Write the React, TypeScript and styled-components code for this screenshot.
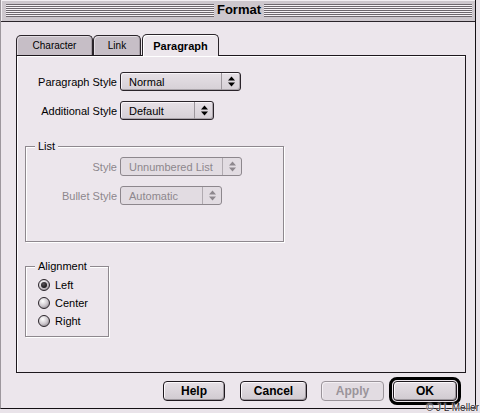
import React from "react";
import styled, { createGlobalStyle } from "styled-components";

const Global = createGlobalStyle`
  html, body { margin: 0; padding: 0; background: #e9e3e9; }
  body { font-family: "Liberation Sans", Arial, sans-serif; font-size: 11px; color: #000; }
  * { box-sizing: border-box; }
`;

const Screen = styled.div`
  position: relative;
  width: 480px;
  height: 413px;
  background: #e9e3e9;
  overflow: hidden;
`;

const Window = styled.div`
  width: 476px;
  height: 409px;
  display: flex;
  flex-direction: column;
  background: #ece6ec;
  border-left: 1px solid #9d979d;
  border-right: 1px solid #141014;
  border-bottom: 1px solid #141014;
`;

const TitleBar = styled.div`
  height: 22px;
  display: flex;
  align-items: center;
  padding: 0 3px 1px 5px;
  background: #cdc7cd;
  border-bottom: 1px solid #2a242a;
  box-shadow: inset 1px 1px 0 #f2eef2;
`;

const TitleLines = styled.div`
  flex: 1;
  height: 13px;
  background: repeating-linear-gradient(to bottom, #6e686e 0 1px, #f6f2f6 1px 2px);
`;

const Title = styled.div`
  font-size: 13px;
  font-weight: bold;
  padding: 0 3px;
  line-height: 14px;
`;

const Body = styled.div`
  flex: 1;
  display: flex;
  flex-direction: column;
  padding: 12px 0 0 15px;
`;

const TabRow = styled.div`
  display: flex;
  align-items: flex-end;
  height: 21px;
  position: relative;
  z-index: 1;
`;

const Tab = styled.div<{ $w: number; $active?: boolean; $gap?: number }>`
  width: ${(p) => p.$w}px;
  height: ${(p) => (p.$active ? 22 : 20)}px;
  margin-bottom: ${(p) => (p.$active ? -1 : 0)}px;
  margin-left: ${(p) => p.$gap ?? 0}px;
  display: flex;
  align-items: center;
  justify-content: center;
  border: 1px solid #2a242a;
  border-bottom: none;
  border-radius: 5px 5px 0 0;
  background: ${(p) => (p.$active ? "#ece6ec" : "#c6bec6")};
  box-shadow: ${(p) =>
    p.$active ? "inset 1px 1px 0 #fff" : "inset 1px 1px 0 #e2dce2, inset -1px 0 0 #a49ca4"};
  font-size: ${(p) => (p.$active ? 11 : 10)}px;
  font-weight: ${(p) => (p.$active ? "bold" : "normal")};
  padding-top: ${(p) => (p.$active ? 1 : 0)}px;
`;

const Panel = styled.div`
  width: 450px;
  height: 318px;
  border: 1px solid #1e181e;
  background: #ece6ec;
  box-shadow: inset 1px 1px 0 #fff;
  padding: 16px 0 0 0;
  display: flex;
  flex-direction: column;
  align-items: flex-start;
`;

const FieldRow = styled.div<{ $label: number }>`
  display: grid;
  grid-template-columns: ${(p) => p.$label}px auto;
  column-gap: 3px;
  align-items: center;
  height: 19px;
  margin-bottom: 10px;
`;

const Label = styled.span<{ $disabled?: boolean }>`
  text-align: right;
  white-space: nowrap;
  color: ${(p) => (p.$disabled ? "#8d878d" : "#000")};
`;

const SelectBox = styled.div<{ $w: number; $disabled?: boolean }>`
  width: ${(p) => p.$w}px;
  height: 19px;
  display: flex;
  align-items: stretch;
  border: 1px solid ${(p) => (p.$disabled ? "#8d878d" : "#2a242a")};
  border-radius: 3px;
  background: ${(p) =>
    p.$disabled ? "#e2dce2" : "linear-gradient(#e6e0e6, #d6d0d6)"};
  box-shadow: ${(p) =>
    p.$disabled ? "none" : "inset 1px 1px 0 #f8f4f8, inset -1px -1px 0 #aaa4aa"};
  color: ${(p) => (p.$disabled ? "#8d878d" : "#000")};
`;

const SelectText = styled.span`
  flex: 1;
  display: flex;
  align-items: center;
  padding-left: 8px;
  white-space: nowrap;
`;

const SelectArrow = styled.span<{ $disabled?: boolean }>`
  width: 19px;
  display: flex;
  align-items: center;
  justify-content: center;
  border-left: 1px solid ${(p) => (p.$disabled ? "#b0aab0" : "#9c969c")};
`;

const Group = styled.div<{ $w: number; $h: number; $mt: number }>`
  position: relative;
  width: ${(p) => p.$w}px;
  height: ${(p) => p.$h}px;
  margin: ${(p) => p.$mt}px 0 0 8px;
  border: 1px solid #8e888e;
  box-shadow: 1px 1px 0 #fff, inset 1px 1px 0 #fff;
`;

const Legend = styled.span`
  position: absolute;
  top: -8px;
  left: 9px;
  padding: 0 3px;
  background: #ece6ec;
  line-height: 14px;
`;

const GroupBody = styled.div<{ $pt: number; $pl: number }>`
  padding: ${(p) => p.$pt}px 0 0 ${(p) => p.$pl}px;
  display: flex;
  flex-direction: column;
`;

const RadioRow = styled.div`
  height: 18px;
  display: flex;
  align-items: center;
  gap: 5px;
`;

const RadioDot = styled.span<{ $on?: boolean }>`
  width: 12px;
  height: 12px;
  border-radius: 50%;
  border: 1px solid #2a242a;
  background: radial-gradient(circle at 38% 32%, #ffffff 0%, #cfc9cf 50%, #777177 100%);
  display: flex;
  align-items: center;
  justify-content: center;
  &::after {
    content: "";
    display: ${(p) => (p.$on ? "block" : "none")};
    width: 6px;
    height: 6px;
    border-radius: 50%;
    background: radial-gradient(circle at 40% 35%, #5a545a, #000);
  }
`;

const ButtonRow = styled.div`
  flex: 1;
  display: flex;
  align-items: center;
  justify-content: flex-end;
  padding: 1px 14px 0 0;
`;

const Button = styled.div<{ $w: number; $ml?: number; $disabled?: boolean }>`
  width: ${(p) => p.$w}px;
  height: 20px;
  margin-left: ${(p) => p.$ml ?? 0}px;
  display: flex;
  align-items: center;
  justify-content: center;
  border: 1px solid ${(p) => (p.$disabled ? "#9a949a" : "#1e181e")};
  border-radius: 4px;
  background: ${(p) => (p.$disabled ? "#e2dce2" : "linear-gradient(#e6e0e6, #d0cad0)")};
  box-shadow: ${(p) =>
    p.$disabled ? "inset 1px 1px 0 #f4f0f4" : "inset 1px 1px 0 #fbf8fb, inset -1px -1px 0 #9c969c"};
  font-size: 12px;
  font-weight: bold;
  color: ${(p) => (p.$disabled ? "#9a949a" : "#000")};
`;

const DefaultRing = styled.div<{ $ml: number }>`
  margin-left: ${(p) => p.$ml}px;
  padding: 1px;
  border: 3px solid #000;
  border-radius: 8px;
`;

const Credit = styled.span`
  position: absolute;
  right: 1px;
  bottom: 0;
  font-size: 10px;
  line-height: 10px;
  color: #2a242a;
  text-shadow: 0 0 2px #fff, 0 0 1px #fff;
  white-space: nowrap;
`;

const Arrows = ({ disabled }: { disabled?: boolean }) => (
  <svg width="7" height="11" viewBox="0 0 7 11">
    <path d="M0 4.5 L3.5 0.5 L7 4.5 Z M0 6.5 L7 6.5 L3.5 10.5 Z" fill={disabled ? "#8d878d" : "#000"} />
  </svg>
);

const Select = ({ w, value, disabled }: { w: number; value: string; disabled?: boolean }) => (
  <SelectBox $w={w} $disabled={disabled}>
    <SelectText>{value}</SelectText>
    <SelectArrow $disabled={disabled}>
      <Arrows disabled={disabled} />
    </SelectArrow>
  </SelectBox>
);

export default function App() {
  return (
    <Screen>
      <Global />
      <Window>
        <TitleBar>
          <TitleLines />
          <Title>Format</Title>
          <TitleLines />
        </TitleBar>
        <Body>
          <TabRow>
            <Tab $w={77}>Character</Tab>
            <Tab $w={48}>Link</Tab>
            <Tab $w={77} $gap={1} $active>
              Paragraph
            </Tab>
          </TabRow>
          <Panel>
            <FieldRow $label={100}>
              <Label>Paragraph Style</Label>
              <Select w={121} value="Normal" />
            </FieldRow>
            <FieldRow $label={100}>
              <Label>Additional Style</Label>
              <Select w={94} value="Default" />
            </FieldRow>
            <Group $w={259} $h={96} $mt={16}>
              <Legend>List</Legend>
              <GroupBody $pt={10} $pl={0}>
                <FieldRow $label={91}>
                  <Label $disabled>Style</Label>
                  <Select w={122} value="Unnumbered List" disabled />
                </FieldRow>
                <FieldRow $label={91}>
                  <Label $disabled>Bullet Style</Label>
                  <Select w={102} value="Automatic" disabled />
                </FieldRow>
              </GroupBody>
            </Group>
            <Group $w={84} $h={71} $mt={24}>
              <Legend>Alignment</Legend>
              <GroupBody $pt={9} $pl={12}>
                <RadioRow>
                  <RadioDot $on />
                  Left
                </RadioRow>
                <RadioRow>
                  <RadioDot />
                  Center
                </RadioRow>
                <RadioRow>
                  <RadioDot />
                  Right
                </RadioRow>
              </GroupBody>
            </Group>
          </Panel>
          <ButtonRow>
            <Button $w={62}>Help</Button>
            <Button $w={67} $ml={15}>
              Cancel
            </Button>
            <Button $w={63} $ml={14} $disabled>
              Apply
            </Button>
            <DefaultRing $ml={5}>
              <Button $w={64}>OK</Button>
            </DefaultRing>
          </ButtonRow>
        </Body>
      </Window>
      <Credit>© J L Meller</Credit>
    </Screen>
  );
}
